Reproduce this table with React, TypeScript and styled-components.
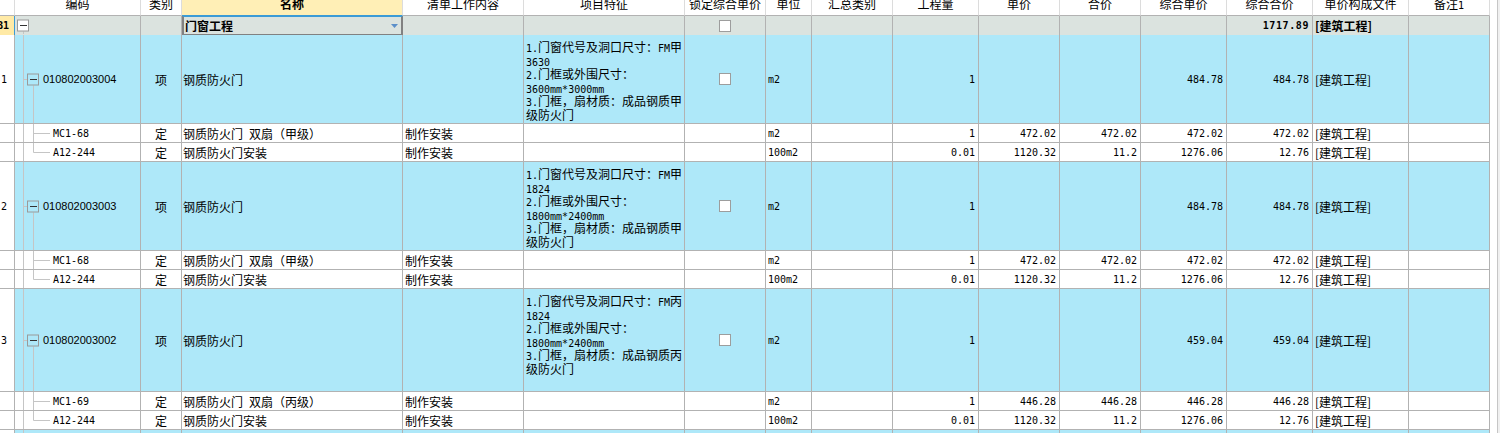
import React from "react";
import styled, { createGlobalStyle } from "styled-components";

const GlobalStyle = createGlobalStyle`
  html, body { margin: 0; padding: 0; background: #fff; overflow: hidden; }
  body { font-family: "Noto Sans CJK SC", sans-serif; font-size: 12px; color: #000; }
`;

const COLS = [15, 126, 41, 221, 121, 161, 81, 46, 81, 86, 81, 81, 86, 86, 96, 81];
const TEMPLATE = COLS.map((w) => `${w}px`).join(" ");
const GRID = "#b2b2b2";
const BLUE = "#aee8f9";
const GROUP = "#dbe3df";
const SELECT = "#3b9bd6";

const Page = styled.div`
  display: flex;
  width: 1500px;
  height: 433px;
  overflow: hidden;
`;

const Sheet = styled.div`
  width: 1490px;
  flex: none;
  display: flex;
  flex-direction: column;
`;

const RightGap = styled.div`
  width: 7px;
  flex: none;
  background: #fff;
`;

const ScrollEdge = styled.div`
  flex: 1;
  border-left: 1px solid #c6c6c6;
  background: #f0f0f0;
`;

const Row = styled.div<{ $h: number; $bg: string }>`
  display: grid;
  grid-template-columns: ${TEMPLATE};
  height: ${(p) => p.$h}px;
  flex: none;
  background: ${(p) => p.$bg};
`;

const Cell = styled.div<{ $align?: "left" | "center" | "right" }>`
  box-sizing: border-box;
  border-right: 1px solid ${GRID};
  border-bottom: 1px solid ${GRID};
  display: flex;
  align-items: center;
  justify-content: ${(p) =>
    p.$align === "center" ? "center" : p.$align === "right" ? "flex-end" : "flex-start"};
  padding: ${(p) => (p.$align === "right" ? "0 3px 0 0" : p.$align === "center" ? "0" : "0 0 0 2px")};
  overflow: hidden;
  white-space: pre;
  min-width: 0;
`;

const NameCell = styled(Cell)`
  padding-left: 1px;
`;

const RowNumCell = styled(Cell)<{ $selected?: boolean }>`
  background: ${(p) => (p.$selected ? "#ffeaa6" : "#fff")};
  border-right-color: ${(p) => (p.$selected ? SELECT : GRID)};
  padding-left: 1px;
  font-family: "DejaVu Sans Mono", monospace;
  font-size: 10px;
  font-weight: ${(p) => (p.$selected ? 700 : 400)};
`;

const RowNumText = styled.span<{ $shift?: boolean }>`
  margin-left: ${(p) => (p.$shift ? "-4px" : "0")};
`;

const CodeCell = styled(Cell)`
  padding: 0;
  align-items: stretch;
`;

const CodeText = styled.span<{ $sub?: boolean }>`
  align-self: center;
  font-family: ${(p) => (p.$sub ? '"DejaVu Sans Mono", monospace' : '"Liberation Sans", sans-serif')};
  font-size: ${(p) => (p.$sub ? "10px" : "11px")};
`;

const FeatureCell = styled(Cell)`
  flex-direction: column;
  align-items: flex-start;
  justify-content: flex-start;
  padding-top: 5px;
`;

const FeatureLine = styled.div`
  height: 13.6px;
  line-height: 13.6px;
  flex: none;
`;

const NumCell = styled(Cell)`
  font-family: "DejaVu Sans Mono", monospace;
  font-size: 10px;
`;

const BoldNum = styled.span`
  font-weight: 700;
  letter-spacing: 0.6px;
`;

const Editor = styled.div`
  box-sizing: border-box;
  border: 2px solid #818181;
  border-top: 1px solid ${SELECT};
  display: flex;
  align-items: center;
  justify-content: space-between;
  padding: 0 3px 0 1px;
  font-weight: 700;
`;

const GroupFile = styled.span`
  font-weight: 700;
`;

const Check = styled.span`
  box-sizing: border-box;
  width: 12px;
  height: 12px;
  background: #fff;
  border: 1px solid #9d9d9d;
`;

const HeaderCell = styled.div<{ $active?: boolean }>`
  box-sizing: border-box;
  border-right: 1px solid #dcdcdc;
  border-bottom: 1px solid ${(p) => (p.$active ? SELECT : GRID)};
  background: ${(p) => (p.$active ? "#ffefb6" : "#fff")};
  display: flex;
  justify-content: center;
  align-items: flex-start;
  overflow: hidden;
  font-weight: ${(p) => (p.$active ? 700 : 400)};
`;

const HeaderLabel = styled.span`
  line-height: 12px;
  margin-top: -2px;
  white-space: nowrap;
`;

const TextRun = styled.span`
  white-space: pre;
`;

const Latin = styled.span`
  font-family: "DejaVu Sans Mono", monospace;
  font-size: 10px;
`;

function Mixed({ text }: { text: string }) {
  const parts = text.split(/([\x20-\x7E]+)/).filter(Boolean);
  return (
    <TextRun>
      {parts.map((p, i) =>
        /^[\x20-\x7E]+$/.test(p) ? <Latin key={i}>{p}</Latin> : <React.Fragment key={i}>{p}</React.Fragment>
      )}
    </TextRun>
  );
}

const TREE = "#c5c5c5";
const BOX = "#9a9a9a";

function GroupTree({ h }: { h: number }) {
  const c = Math.floor((h - 1) / 2) + 0.5;
  return (
    <svg width={28} height={h - 1} style={{ flex: "none" }}>
      <line x1={8.5} y1={c + 6} x2={8.5} y2={h} stroke={TREE} />
      <rect x={2.5} y={c - 5.5} width={11} height={11} fill="#fff" stroke={BOX} />
      <line x1={5} y1={c} x2={12} y2={c} stroke="#333" />
    </svg>
  );
}

function ItemTree({ h, empty }: { h: number; empty?: boolean }) {
  const c = Math.floor((h - 1) / 2) + 0.5;
  return (
    <svg width={28} height={h - 1} style={{ flex: "none" }}>
      <line x1={8.5} y1={0} x2={8.5} y2={h} stroke={TREE} />
      {!empty && (
        <>
          <line x1={8.5} y1={c} x2={12} y2={c} stroke={TREE} />
          <line x1={18.5} y1={c + 6} x2={18.5} y2={h} stroke={TREE} />
          <rect x={12.5} y={c - 5.5} width={11} height={11} fill="none" stroke={BOX} />
          <line x1={15} y1={c} x2={22} y2={c} stroke="#333" />
        </>
      )}
    </svg>
  );
}

function SubTree({ h, last }: { h: number; last: boolean }) {
  const c = Math.floor((h - 1) / 2) + 0.5;
  return (
    <svg width={38} height={h - 1} style={{ flex: "none" }}>
      <line x1={8.5} y1={0} x2={8.5} y2={h} stroke={TREE} />
      <line x1={18.5} y1={0} x2={18.5} y2={last ? c : h} stroke={TREE} />
      <line x1={18.5} y1={c} x2={35} y2={c} stroke={TREE} />
    </svg>
  );
}

const DropArrow = () => (
  <svg width={7} height={4} viewBox="0 0 7 4">
    <polygon points="0,0 7,0 3.5,4" fill="#5b8fc9" />
  </svg>
);

type Sub = {
  code: string;
  name: string;
  unit: string;
  qty: string;
  price: string;
  total: string;
  cprice: string;
  ctotal: string;
};

type Item = {
  no: string;
  code: string;
  h: number;
  feature: string[];
  cprice: string;
  subs: Sub[];
};

const HEADERS = [
  "",
  "编码",
  "类别",
  "名称",
  "清单工作内容",
  "项目特征",
  "锁定综合单价",
  "单位",
  "汇总类别",
  "工程量",
  "单价",
  "合价",
  "综合单价",
  "综合合价",
  "单价构成文件",
  "备注1",
];

const a12: Sub = {
  code: "A12-244",
  name: "钢质防火门安装",
  unit: "100m2",
  qty: "0.01",
  price: "1120.32",
  total: "11.2",
  cprice: "1276.06",
  ctotal: "12.76",
};

const ITEMS: Item[] = [
  {
    no: "1",
    code: "010802003004",
    h: 89,
    feature: [
      "1.门窗代号及洞口尺寸：FM甲",
      "3630",
      "2.门框或外围尺寸：",
      "3600mm*3000mm",
      "3.门框，扇材质：成品钢质甲",
      "级防火门",
    ],
    cprice: "484.78",
    subs: [
      {
        code: "MC1-68",
        name: "钢质防火门 双扇（甲级）",
        unit: "m2",
        qty: "1",
        price: "472.02",
        total: "472.02",
        cprice: "472.02",
        ctotal: "472.02",
      },
      a12,
    ],
  },
  {
    no: "2",
    code: "010802003003",
    h: 89,
    feature: [
      "1.门窗代号及洞口尺寸：FM甲",
      "1824",
      "2.门框或外围尺寸：",
      "1800mm*2400mm",
      "3.门框，扇材质：成品钢质甲",
      "级防火门",
    ],
    cprice: "484.78",
    subs: [
      {
        code: "MC1-68",
        name: "钢质防火门 双扇（甲级）",
        unit: "m2",
        qty: "1",
        price: "472.02",
        total: "472.02",
        cprice: "472.02",
        ctotal: "472.02",
      },
      a12,
    ],
  },
  {
    no: "3",
    code: "010802003002",
    h: 103,
    feature: [
      "1.门窗代号及洞口尺寸：FM丙",
      "1824",
      "2.门框或外围尺寸：",
      "1800mm*2400mm",
      "3.门框，扇材质：成品钢质丙",
      "级防火门",
    ],
    cprice: "459.04",
    subs: [
      {
        code: "MC1-69",
        name: "钢质防火门 双扇（丙级）",
        unit: "m2",
        qty: "1",
        price: "446.28",
        total: "446.28",
        cprice: "446.28",
        ctotal: "446.28",
      },
      a12,
    ],
  },
];

function ItemRow({ item }: { item: Item }) {
  return (
    <Row $h={item.h} $bg={BLUE}>
      <RowNumCell>{item.no}</RowNumCell>
      <CodeCell>
        <ItemTree h={item.h} />
        <CodeText>{item.code}</CodeText>
      </CodeCell>
      <Cell $align="center">项</Cell>
      <NameCell>钢质防火门</NameCell>
      <Cell />
      <FeatureCell>
        {item.feature.map((l, i) => (
          <FeatureLine key={i}>
            <Mixed text={l} />
          </FeatureLine>
        ))}
      </FeatureCell>
      <Cell $align="center">
        <Check />
      </Cell>
      <NumCell>m2</NumCell>
      <Cell />
      <NumCell $align="right">1</NumCell>
      <Cell />
      <Cell />
      <NumCell $align="right">{item.cprice}</NumCell>
      <NumCell $align="right">{item.cprice}</NumCell>
      <Cell>[建筑工程]</Cell>
      <Cell />
    </Row>
  );
}

function SubRow({ sub, last }: { sub: Sub; last: boolean }) {
  return (
    <Row $h={19} $bg="#fff">
      <RowNumCell />
      <CodeCell>
        <SubTree h={19} last={last} />
        <CodeText $sub>{sub.code}</CodeText>
      </CodeCell>
      <Cell $align="center">定</Cell>
      <NameCell>
        <Mixed text={sub.name} />
      </NameCell>
      <Cell>制作安装</Cell>
      <Cell />
      <Cell />
      <NumCell>{sub.unit}</NumCell>
      <Cell />
      <NumCell $align="right">{sub.qty}</NumCell>
      <NumCell $align="right">{sub.price}</NumCell>
      <NumCell $align="right">{sub.total}</NumCell>
      <NumCell $align="right">{sub.cprice}</NumCell>
      <NumCell $align="right">{sub.ctotal}</NumCell>
      <Cell>[建筑工程]</Cell>
      <Cell />
    </Row>
  );
}

export default function App() {
  return (
    <>
      <GlobalStyle />
      <Page>
        <Sheet>
          <Row $h={16} $bg="#fff">
            {HEADERS.map((h, i) => (
              <HeaderCell key={i} $active={i === 3}>
                <HeaderLabel>
                  <Mixed text={h} />
                </HeaderLabel>
              </HeaderCell>
            ))}
          </Row>
          <Row $h={19} $bg={GROUP}>
            <RowNumCell $selected>
              <RowNumText $shift>B1</RowNumText>
            </RowNumCell>
            <CodeCell>
              <GroupTree h={19} />
            </CodeCell>
            <Cell />
            <Editor>
              <span>门窗工程</span>
              <DropArrow />
            </Editor>
            <Cell />
            <Cell />
            <Cell $align="center">
              <Check />
            </Cell>
            <Cell />
            <Cell />
            <Cell />
            <Cell />
            <Cell />
            <Cell />
            <NumCell $align="right">
              <BoldNum>1717.89</BoldNum>
            </NumCell>
            <Cell>
              <GroupFile>[建筑工程]</GroupFile>
            </Cell>
            <Cell />
          </Row>
          {ITEMS.map((item) => (
            <React.Fragment key={item.no}>
              <ItemRow item={item} />
              {item.subs.map((s, i) => (
                <SubRow key={i} sub={s} last={i === item.subs.length - 1} />
              ))}
            </React.Fragment>
          ))}
          <Row $h={89} $bg={BLUE}>
            <RowNumCell />
            <CodeCell>
              <ItemTree h={89} empty />
            </CodeCell>
            {COLS.slice(2).map((_, i) => (
              <Cell key={i} />
            ))}
          </Row>
        </Sheet>
        <RightGap />
        <ScrollEdge />
      </Page>
    </>
  );
}
